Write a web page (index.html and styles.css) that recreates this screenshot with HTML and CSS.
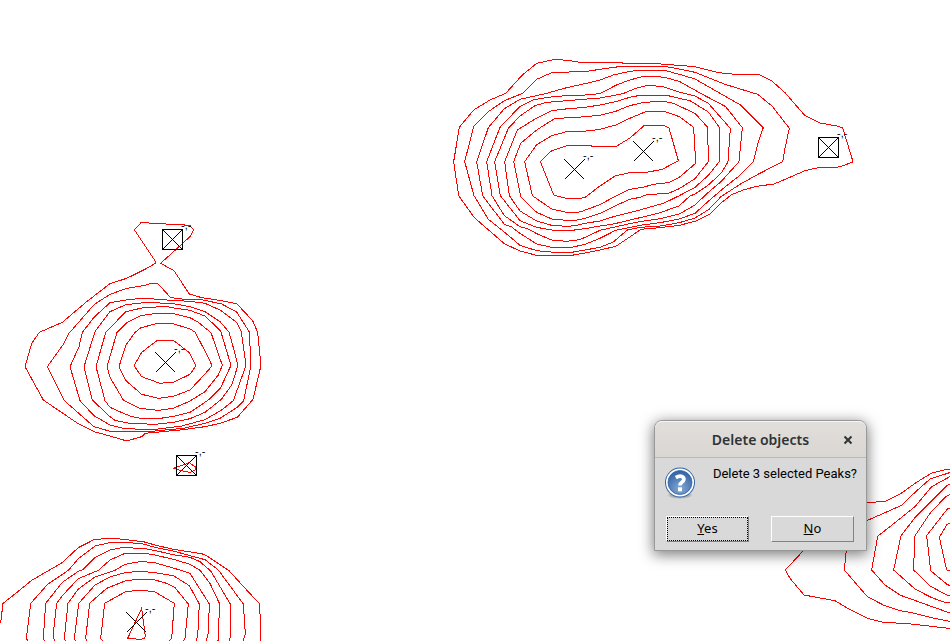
FILE: index.html
```
<!DOCTYPE html>
<html lang="en">
<head>
<meta charset="utf-8">
<title>Peaks</title>
<link rel="stylesheet" href="styles.css">
</head>
<body>
<main class="spectrum">
<svg class="plot" aria-label="Contour plot with peaks">
  <defs>
    <path id="cross" d="M-10-10L10 10M10-10L-10 10"/>
    <path id="selected" d="M-10-10H10V10H-10ZL10 10M10-10L-10 10"/>
  </defs>
  <!-- contours are in thirds of a pixel -->
  <g class="contour" transform="translate(440 50) scale(.33333)">
    <path d="M345 28L290 40 245 77 197 130 150 150 101 180 58 232 41 335 56 437 103 503 193 581 240 603 290 616 395 616 435 609 480 600 527 589 562 566 600 540 612 537 660 533 718 526 765 514 810 492 843 459 875 434 910 420 950 409 1002 402 1045 384 1095 362 1140 352 1197 351 1237 337 1236 325 1208 234 1190 228 1140 219 1095 197 1035 128 997 94 955 73 885 73 835 68 765 50 690 44 650 41 549 40 545 37 420 37 390 32Z"/>
    <path d="M335 68L290 88 248 130 193 152 145 185 101 230 74 335 102 437 145 508 193 546 240 586 290 602 345 607 395 607 480 592 520 576 562 540 600 532 660 528 718 518 765 504 807 478 843 440 900 403 950 375 1028 335 1034 300 1048 235 997 169 953 133 855 103 765 67 718 57 673 49 549 49 520 52 440 64Z"/>
    <path d="M320 130L240 148 193 176 145 233 110 335 128 437 193 523 215 531 240 550 290 582 335 592 395 592 435 583 480 565 527 541 600 526 660 518 718 507 765 490 807 452 850 415 897 378 940 335 955 275 970 233 903 166 840 130 765 87 718 73 673 61 600 61 569 64 520 75 480 90 435 101 380 113Z"/>
    <path d="M345 139L280 149 240 169 180 232 140 335 156 437 193 497 240 530 265 537 290 551 335 570 380 574 420 569 480 541 569 521 600 515 660 506 718 492 765 465 805 427 843 395 897 335 907 233 857 170 780 129 718 94 673 82 640 79 612 79 569 90 527 106 480 131 435 135Z"/>
    <path d="M320 157L285 167 240 198 205 235 164 335 181 437 240 512 290 532 335 540 380 543 435 536 480 528 520 522 600 503 660 488 717 468 750 438 765 432 805 405 845 368 864 335 871 235 805 160 765 138 718 126 670 110 625 106 590 114 549 131 480 144 380 152Z"/>
    <path d="M335 182L290 204 232 240 194 335 208 437 240 483 290 513 335 526 380 529 407 527 435 520 480 513 527 498 600 480 673 459 718 437 765 412 805 376 838 335 838 232 805 186 750 152 718 145 680 136 600 136 569 142 527 155 480 165 435 172 365 178Z"/>
    <path d="M345 205L290 240 242 280 221 335 242 440 290 487 335 507 380 511 407 511 435 505 480 490 520 470 569 448 600 442 620 434 685 430 718 416 765 386 805 335 803 232 765 190 700 160 670 154 612 157 569 167 527 184 480 196 400 203Z"/>
    <path d="M254 335L277 437 335 477 380 487 420 486 480 464 527 438 569 418 612 411 640 403 685 398 718 382 768 339 766 320 761 232 718 200 673 184 620 184 569 205 527 225 480 238 440 243 380 245 335 257 290 284Z"/>
    <path d="M301 335L341 435 385 447 410 447 435 442 480 408 525 378 569 368 620 367 667 358 715 332 687 234 673 227 612 227 570 264 527 290 458 290 453 287 380 287 335 302Z"/>
  </g>
  <g class="contour" transform="translate(130 210) scale(.33333)">
    <path d="M76 160V154L13 59 33 38 105 41 110 43 155 44 180 47 191 60 180 80 92 160 132 182 178 252 215 263 275 272 320 281 368 332 383 367 393 466 369 568 322 622 270 640 225 650 160 659 45 670 35 680 0 690-13 692-60 678-108 665-160 638-260 570-315 470-295 400-272 367-203 337-130 275-60 221-10 205 45 178Z"/>
    <path d="M-248 470L-200 403-183 370-107 283-60 253-10 235 45 226 57 222 83 220 122 263 155 267 215 269 275 282 320 306 358 366 363 466 341 572 320 593 270 625 225 640 160 655 75 663 30 666-60 664-108 650-197 572Z"/>
    <path d="M-180 470L-153 410-143 367-107 321-60 278 0 268 45 265 110 270 180 274 225 280 270 300 320 337 334 366 348 466 310 572 275 600 225 629 155 648 75 658 30 658-20 655-60 645-108 617-150 572Z"/>
    <path d="M-138 470L-105 365-60 305-13 284 50 277 130 281 180 290 225 305 270 335 297 366 312 420 324 466 305 525 274 568 225 607 180 626 130 637 75 643 0 640-45 631-60 620-113 570Z"/>
    <path d="M-102 470L-73 368-13 305 45 292 110 290 145 296 180 301 225 318 272 363 303 466 272 533 235 570 180 607 130 619 85 626 30 625 0 618-38 602-60 592-75 572Z"/>
    <path d="M-69 470L-39 367-10 338 33 317 80 310 130 311 180 323 205 337 243 368 277 466 265 495 225 545 180 573 130 595 85 601 30 595-20 570-60 502Z"/>
    <path d="M-33 470L-12 405 15 367 33 353 80 341 130 341 145 346 180 357 195 366 238 448 246 468 225 492 180 540 130 559 85 565 35 553-12 512Z"/>
    <path d="M12 467L35 427 82 391 130 391 178 428 198 467 180 493 132 516 90 520 35 500Z"/>
    <path d="M131 775L178 758 198 772 196 780 180 787 150 781Z"/>
  </g>
  <g class="contour" transform="translate(0 530) scale(.33333)">
    <path d="M2 278L9 220 50 188 95 151 185 99 235 53 280 30 320 25 350 26 430 35 465 45 520 58 605 71 620 77 687 122 740 180 779 222 783 333"/>
    <path d="M84 333L79 325 92 220 143 163 205 121 235 86 285 48 330 38 390 38 430 42 465 52 520 63 570 77 615 89 655 120 730 222 736 310 730 333"/>
    <path d="M133 333L130 325 137 220 187 157 235 124 250 118 285 83 330 60 372 52 440 57 480 65 520 74 570 82 600 95 632 123 691 222 690 333"/>
    <path d="M163 333L160 310 170 220 187 197 235 146 295 121 330 90 373 71 435 70 465 75 520 88 570 103 600 121 630 160 659 222 654 333"/>
    <path d="M196 333L193 325 204 220 235 177 285 141 345 121 375 103 420 95 460 97 520 114 570 130 628 222 625 310 618 333"/>
    <path d="M226 333L223 325 236 220 285 165 330 141 375 128 420 124 465 128 520 137 568 167 598 222 593 320 588 333"/>
    <path d="M260 333L257 325 269 220 320 175 375 153 420 147 465 150 500 160 525 173 565 222 555 325 550 333"/>
    <path d="M309 333L302 325 314 220 375 186 420 180 465 186 523 220 515 325 508 333"/>
    <path d="M425 235L436 318 432 326 420 328 383 325Z"/>
  </g>
  <g class="contour" transform="translate(780 460) scale(.33333)">
    <path d="M515 27L500 28 455 39 405 70 365 99 315 124 260 128 72 270 16 330 30 355 72 405 165 422 200 443 262 475 310 487 385 491 515 506"/>
    <path d="M515 36L450 57 405 97 365 136 258 183 199 270 193 330 262 410 310 435 360 452 400 459 460 474 515 485"/>
    <path d="M515 47L455 80 405 140 365 172 293 229 275 330 315 375 362 406 515 461"/>
    <path d="M515 71L500 77 455 122 405 173 363 227 341 330 405 387 455 413 495 427 515 427"/>
    <path d="M515 101L497 110 450 160 404 229 401 330 450 378 500 405 515 410"/>
    <path d="M515 142L502 147 440 227 452 332 502 374 515 378"/>
    <path d="M515 185L500 195 478 232 500 330 515 334"/>
  </g>
  <g class="mark">
    <use href="#cross" x="574.5" y="169.5"/>
    <use href="#cross" x="643.5" y="151.5"/>
    <use href="#cross" x="165.5" y="362.5"/>
    <use href="#cross" x="136.5" y="622.5"/>
    <use href="#selected" x="828.5" y="147.5"/>
    <use href="#selected" x="172.5" y="239.5"/>
    <use href="#selected" x="186.5" y="465.5"/>
  </g>
  <g class="label">
    <text x="583" y="159">-,-</text>
    <text x="652" y="141">-,-</text>
    <text x="174" y="352">-,-</text>
    <text x="145" y="612">-,-</text>
    <text x="837" y="137">-,-</text>
    <text x="181" y="229">-,-</text>
    <text x="195" y="455">-,-</text>
  </g>
</svg>
<section class="dialog" role="dialog" aria-labelledby="title">
  <header class="titlebar">
    <h1 class="title" id="title">Delete objects</h1>
    <button class="close" type="button" aria-label="Close"><svg width="10" height="10"><path d="M1.500 1.500L8.500 8.500M8.500 1.500L1.500 8.500"/></svg></button>
  </header>
  <div class="message">
    <svg class="icon" width="32" height="32" viewBox="0 0 32 32" aria-hidden="true">
      <defs>
        <radialGradient id="blue" cx=".5" cy=".75" r=".7"><stop offset="0" stop-color="#86a9d6"/><stop offset="1" stop-color="#3465a4"/></radialGradient>
        <radialGradient id="shade"><stop offset=".4" stop-color="#000" stop-opacity=".4"/><stop offset="1" stop-color="#000" stop-opacity="0"/></radialGradient>
      </defs>
      <ellipse cx="16" cy="28" rx="13" ry="4" fill="url(#shade)"/>
      <circle cx="16" cy="15.500" r="15" fill="#3465a4"/>
      <circle cx="16" cy="15.500" r="14" fill="#fff"/>
      <circle cx="16" cy="15.500" r="12" fill="url(#blue)" stroke="#3465a4" stroke-width=".8"/>
      <path d="M11.800 10.600Q15.500 8.400 18.200 9.600C21 11.200 19.800 14 17.900 15.200Q16 16.400 16 18.500" fill="none" stroke="#fff" stroke-width="3.700"/>
      <rect x="14" y="20.300" width="4" height="4" fill="#fff"/>
    </svg>
    <p class="question">Delete 3 selected Peaks?</p>
  </div>
  <div class="actions">
    <button class="button focused" type="button"><u>Y</u>es</button>
    <button class="button" type="button"><u>N</u>o</button>
  </div>
</section>
</main>
</body>
</html>
```
FILE: styles.css
```
* { box-sizing: border-box; }
body { margin: 0; background: #fff; }
.spectrum { position: relative; height: 100vh; overflow: hidden; }
.plot { display: block; width: 100%; height: 100%; }
.contour path {
  fill: none;
  stroke: #f00;
  stroke-width: 1px;
  vector-effect: non-scaling-stroke;
  shape-rendering: crispEdges;
}
.mark { fill: none; stroke: #000; stroke-width: 1px; shape-rendering: crispEdges; }
.label { font: 11px "Liberation Sans", sans-serif; }
.dialog {
  position: absolute;
  left: 654px;
  top: 420px;
  width: 213px;
  background: #d9d9d9;
  border: 1px solid #999;
  border-radius: 8px 8px 0 0;
  box-shadow: 0 3px 14px 1px rgba(0, 0, 0, 0.5);
}
.titlebar {
  display: grid;
  grid-template-columns: 1fr 36px;
  align-items: center;
  height: 37px;
  padding-left: 36px;
  background: linear-gradient(#e1dedb, #dad6d2);
  border-top: 1px solid #f6f5f4;
  border-bottom: 1px solid #bfb8b1;
  border-radius: 7px 7px 0 0;
}
.title {
  margin: 0;
  text-align: center;
  white-space: nowrap;
  font: 600 14px/18px "Noto Sans", sans-serif;
  color: #2e3436;
}
.close { padding: 0; border: 0; background: none; }
.close svg { display: block; margin: 0 auto; }
.close path { stroke: #2e3436; stroke-width: 2px; }
.message { display: flex; padding: 9px 9px 0; }
.question {
  flex: 1;
  margin: 0;
  text-align: right;
  white-space: nowrap;
  font: 13px/14px Roboto, sans-serif;
  color: #000;
}
.actions { display: flex; justify-content: space-between; padding: 17px 12px 8px 11px; }
.button {
  width: 83px;
  height: 26px;
  padding: 0 0 2px;
  border: 1px solid;
  border-color: #fff #828282 #828282 #fff;
  background: #d9d9d9;
  font: 13px "Noto Sans", sans-serif;
  color: #000;
}
.focused { outline: 1px dotted #000; outline-offset: -2px; }
```
